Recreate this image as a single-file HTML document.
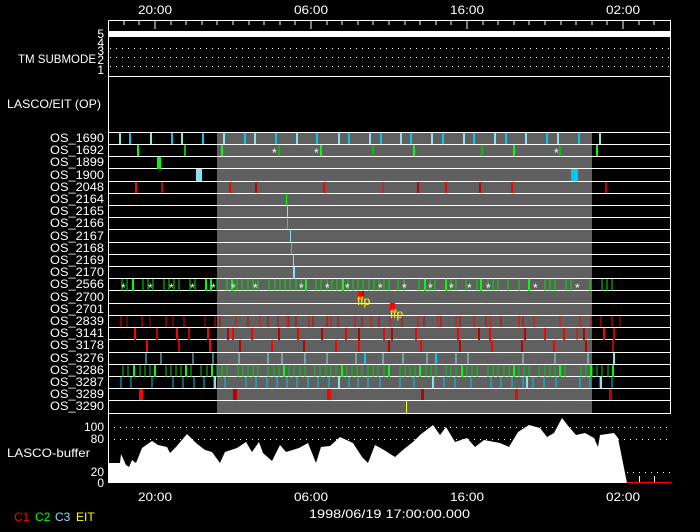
<!DOCTYPE html>
<html><head><meta charset="utf-8"><style>
html,body{margin:0;padding:0;background:#000;}
svg{display:block}
text{font-family:"Liberation Sans",sans-serif;font-size:12px;fill:#fff}
</style></head><body>
<svg width="700" height="532" viewBox="0 0 700 532" xmlns="http://www.w3.org/2000/svg">
<rect width="700" height="532" fill="#000"/>
<rect x="217" y="132" width="375" height="281" fill="#606060"/>
<g lengthAdjust="spacingAndGlyphs">
<text x="138" y="14" textLength="34" lengthAdjust="spacingAndGlyphs">20:00</text>
<text x="294" y="14" textLength="34" lengthAdjust="spacingAndGlyphs">06:00</text>
<text x="450" y="14" textLength="34" lengthAdjust="spacingAndGlyphs">16:00</text>
<text x="606" y="14" textLength="34" lengthAdjust="spacingAndGlyphs">02:00</text>
</g>
<path d="M108.5 20.5H670.5V413.5M108.5 20.5V483" stroke="#fff" fill="none"/>
<path d="M108 76.5H671" stroke="#fff"/>
<path stroke="#fff" stroke-width="1" d="M124 20v5M139 20v5M155 20v9M171 20v5M186 20v5M202 20v5M217 20v5M233 20v5M249 20v5M264 20v5M280 20v5M295 20v5M311 20v9M327 20v5M342 20v5M358 20v5M373 20v5M389 20v5M405 20v5M420 20v5M436 20v5M451 20v5M467 20v9M483 20v5M498 20v5M514 20v5M529 20v5M545 20v5M561 20v5M576 20v5M592 20v5M607 20v5M623 20v9M639 20v5M654 20v5"/>
<rect x="109" y="31" width="562" height="6" fill="#fff"/>
<path d="M110 48.5H670M110 57.5H670M110 66.5H670" stroke="#fff" stroke-dasharray="1 5"/>
<text x="104" y="38" text-anchor="end" font-size="10">5</text>
<text x="104" y="47" text-anchor="end" font-size="10">4</text>
<text x="104" y="55" text-anchor="end" font-size="10">3</text>
<text x="104" y="64" text-anchor="end" font-size="10">2</text>
<text x="104" y="74" text-anchor="end" font-size="10">1</text>
<text x="18" y="63" textLength="78" lengthAdjust="spacingAndGlyphs">TM SUBMODE</text>
<text x="7" y="108" textLength="94" lengthAdjust="spacingAndGlyphs">LASCO/EIT (OP)</text>
<path stroke="#fff" d="M108 132.5H671M108 144.5H671M108 156.5H671M108 168.5H671M108 181.5H671M108 193.5H671M108 205.5H671M108 217.5H671M108 229.5H671M108 242.5H671M108 254.5H671M108 266.5H671M108 278.5H671M108 290.5H671M108 303.5H671M108 315.5H671M108 327.5H671M108 339.5H671M108 352.5H671M108 364.5H671M108 376.5H671M108 388.5H671M108 400.5H671M108 413.5H671"/>
<g>
<text x="50" y="142" textLength="54" lengthAdjust="spacingAndGlyphs">OS_1690</text><text x="50" y="154" textLength="54" lengthAdjust="spacingAndGlyphs">OS_1692</text><text x="50" y="166" textLength="54" lengthAdjust="spacingAndGlyphs">OS_1899</text><text x="50" y="179" textLength="54" lengthAdjust="spacingAndGlyphs">OS_1900</text><text x="50" y="191" textLength="54" lengthAdjust="spacingAndGlyphs">OS_2048</text><text x="50" y="203" textLength="54" lengthAdjust="spacingAndGlyphs">OS_2164</text><text x="50" y="215" textLength="54" lengthAdjust="spacingAndGlyphs">OS_2165</text><text x="50" y="227" textLength="54" lengthAdjust="spacingAndGlyphs">OS_2166</text><text x="50" y="240" textLength="54" lengthAdjust="spacingAndGlyphs">OS_2167</text><text x="50" y="252" textLength="54" lengthAdjust="spacingAndGlyphs">OS_2168</text><text x="50" y="264" textLength="54" lengthAdjust="spacingAndGlyphs">OS_2169</text><text x="50" y="276" textLength="54" lengthAdjust="spacingAndGlyphs">OS_2170</text><text x="50" y="288" textLength="54" lengthAdjust="spacingAndGlyphs">OS_2566</text><text x="50" y="301" textLength="54" lengthAdjust="spacingAndGlyphs">OS_2700</text><text x="50" y="313" textLength="54" lengthAdjust="spacingAndGlyphs">OS_2701</text><text x="50" y="325" textLength="54" lengthAdjust="spacingAndGlyphs">OS_2839</text><text x="50" y="337" textLength="54" lengthAdjust="spacingAndGlyphs">OS_3141</text><text x="50" y="349" textLength="54" lengthAdjust="spacingAndGlyphs">OS_3178</text><text x="50" y="362" textLength="54" lengthAdjust="spacingAndGlyphs">OS_3276</text><text x="50" y="374" textLength="54" lengthAdjust="spacingAndGlyphs">OS_3286</text><text x="50" y="386" textLength="54" lengthAdjust="spacingAndGlyphs">OS_3287</text><text x="50" y="398" textLength="54" lengthAdjust="spacingAndGlyphs">OS_3289</text><text x="50" y="410" textLength="54" lengthAdjust="spacingAndGlyphs">OS_3290</text>
</g>
<g transform="translate(0,133)">
<path stroke="#88e0f0" stroke-width="2" d="M120 0v11M151 0v11M182 0v11M224 0v11M255 0v11M297 0v11M339 0v11M370 0v11M401 0v11M432 0v11M464 0v11M495 0v11M526 0v11M558 0v11M600 0v11"/>
<path stroke="#00c8f0" stroke-width="2" d="M130 0v11M172 0v11M203 0v11M245 0v11M276 0v11M317 0v11M349 0v11M381 0v11M411 0v11M443 0v11M474 0v11M506 0v11M547 0v11M579 0v11"/>
</g>
<g transform="translate(0,145)">
<path stroke="#00ff00" stroke-width="2" d="M138 0v11M222 0v11M321 0v11M514 0v11M597 0v11M414 0v11"/>
<path stroke="#00c000" stroke-width="2" d="M185 0v11M279 0v11M373 0v11M482 0v11M560 0v11"/>
<text x="272" y="12" font-size="9">*</text><text x="314" y="12" font-size="9">*</text><text x="554" y="12" font-size="9">*</text>
</g>
<rect x="157" y="157" width="4" height="12" fill="#00ff00"/>
<rect x="196" y="169" width="6" height="12" fill="#88e0f0"/>
<rect x="571" y="169" width="7" height="12" fill="#00c8f0"/>
<g transform="translate(0,182)">
<path stroke="#ff0000" stroke-width="2" d="M136 0v11M230 0v11M324 0v11M446 0v11M512 0v11"/>
<path stroke="#c00000" stroke-width="2" d="M162 0v11M256 0v11M418 0v11M480 0v11M606 0v11"/>
<path stroke="#ff0000" stroke-width="1" d="M383 0v11"/>
</g>
<path stroke="#00ff00" d="M286.5 194v11M287.5 218v11M291.5 243v11"/>
<path stroke="#88e0f0" d="M287.5 206v11M290.5 230v12M293.5 255v11"/>
<rect x="293" y="267" width="2" height="12" fill="#88e0f0"/>
<g transform="translate(0,279)">
<path stroke="#00e000" stroke-width="1" d="M122 0v12M127 0v12M143 0v12M148 0v12M153 0v12M164 0v12M169 0v12M174 0v12M179 0v12M190 0v12M195 0v12M211 0v12M217 0v12M227 0v12M232 0v12M237 0v12M242 0v12M248 0v12M253 0v12M258 0v12M269 0v12M275 0v12M280 0v12M285 0v12M290 0v12M296 0v12M301 0v12M316 0v12M321 0v12M327 0v12M332 0v12M337 0v12M342 0v12M348 0v12M353 0v12M358 0v12M363 0v12M369 0v12M374 0v12M379 0v12M384 0v12M389 0v12M398 0v12M404 0v12M419 0v12M425 0v12M430 0v12M435 0v12M451 0v12M456 0v12M466 0v12M477 0v12M488 0v12M493 0v12M498 0v12M508 0v12M519 0v12M529 0v12M545 0v12M550 0v12M555 0v12M566 0v12M571 0v12M590 0v12M602 0v12M607 0v12M612 0v12"/>
<path stroke="#00ff00" stroke-width="2" d="M133 0v12M206 0v12M306 0v12M211 0v12M232 0v12M343 0v12M425 0v12M446 0v12M481 0v12M529 0v12"/>
<g font-size="9"><text x="121" y="13">*</text><text x="148" y="13">*</text><text x="169" y="13">*</text><text x="190" y="13">*</text><text x="211" y="13">*</text><text x="231" y="13">*</text><text x="253" y="13">*</text><text x="299" y="13">*</text><text x="325" y="13">*</text><text x="345" y="13">*</text><text x="378" y="13">*</text><text x="402" y="13">*</text><text x="428" y="13">*</text><text x="449" y="13">*</text><text x="467" y="13">*</text><text x="486" y="13">*</text><text x="533" y="13">*</text><text x="575" y="13">*</text></g>
</g>
<rect x="358" y="291" width="4" height="8" fill="#ff0000"/><rect x="362" y="291" width="2" height="8" fill="#c00000"/>
<text x="357" y="305" font-size="9" style="fill:#ff0">ffp</text>
<rect x="390" y="303" width="5" height="8" fill="#ff0000"/>
<text x="390" y="318" font-size="9" style="fill:#ff0">ffp</text>
<g transform="translate(0,316)">
<path stroke="#ff0000" d="M121 0v11M142 0v11M166 0v11M184 0v11M215 0v11M236 0v11M260 0v11M287 0v11M309 0v11M331 0v11M355 0v11M371 0v11M390 0v11M418 0v11M438 0v11M456 0v11M474 0v11M490 0v11M519 0v11M534 0v11M560 0v11M580 0v11M601 0v11M612 0v11"/>
<path stroke="#c00000" d="M127 0v11M150 0v11M173 0v11M205 0v11M220 0v11M248 0v11M268 0v11M278 0v11M289 0v11M296 0v11M313 0v11M327 0v11M338 0v11M362 0v11M379 0v11M402 0v11M424 0v11M441 0v11M460 0v11M486 0v11M501 0v11M523 0v11M591 0v11M620 0v11"/>
</g>
<g transform="translate(0,328)">
<path stroke="#ff0000" stroke-width="2" d="M135 0v12M177 0v12M208 0v12M233 0v12M252 0v12M298 0v12M346 0v12M384 0v12M416 0v12M458 0v12M490 0v12M545 0v12M564 0v12M604 0v12"/>
<path stroke="#c00000" stroke-width="2" d="M157 0v12M189 0v12M228 0v12M279 0v12M322 0v12M359 0v12M392 0v12M479 0v12M525 0v12M584 0v12M614 0v12"/>
<path stroke="#ff0000" stroke-width="1" d="M577 0v12"/>
</g>
<g transform="translate(0,340)">
<path stroke="#ff0000" stroke-width="2" d="M147 0v12M210 0v12M272 0v12M336 0v12M359 0v12M421 0v12M492 0v12M554 0v12"/>
<path stroke="#c00000" stroke-width="2" d="M179 0v12M240 0v12M304 0v12M389 0v12M460 0v12M522 0v12M586 0v12M613 0v12"/>
</g>
<g transform="translate(0,353)">
<path stroke="#88e0f0" d="M146 0v11M161 0v11M193 0v11M213 0v11M239 0v11M268 0v11M282 0v11M305 0v11M327 0v11M356 0v11M383 0v11M403 0v11M427 0v11M456 0v11M468 0v11M523 0v11M555 0v11M588 0v11"/>
<path stroke="#00c8f0" stroke-width="2" d="M365 0v11M436 0v11"/>
<path stroke="#88e0f0" stroke-width="2" d="M614 0v11"/>
</g>
<g transform="translate(0,365)">
<path stroke="#00d000" d="M123 0v12M128 0v12M140 0v12M145 0v12M150 0v12M166 0v12M171 0v12M176 0v12M181 0v12M191 0v12M201 0v12M207 0v12M217 0v12M222 0v12M227 0v12M238 0v12M243 0v12M248 0v12M253 0v12M258 0v12M268 0v12M274 0v12M279 0v12M289 0v12M294 0v12M300 0v12M305 0v12M315 0v12M320 0v12M326 0v12M331 0v12M336 0v12M347 0v12M352 0v12M357 0v12M362 0v12M368 0v12M373 0v12M378 0v12M384 0v12M400 0v12M405 0v12M410 0v12M415 0v12M426 0v12M431 0v12M436 0v12M446 0v12M451 0v12M456 0v12M467 0v12M472 0v12M477 0v12M488 0v12M493 0v12M498 0v12M504 0v12M509 0v12M519 0v12M524 0v12M529 0v12M539 0v12M545 0v12M550 0v12M555 0v12M565 0v12M581 0v12M586 0v12M592 0v12M597 0v12M602 0v12M608 0v12M613 0v12"/>
<path stroke="#00ff00" stroke-width="2" d="M134 0v12M155 0v12M186 0v12M212 0v12M284 0v12M342 0v12M389 0v12M420 0v12M462 0v12M514 0v12M560 0v12M591 0v12M613 0v12"/>
</g>
<g transform="translate(0,377)">
<path stroke="#00c8f0" d="M121 0v11M131 0v11M152 0v11M173 0v11M183 0v11M194 0v11M204 0v11M214 0v11M225 0v11M246 0v11M256 0v11M267 0v11M277 0v11M287 0v11M297 0v11M308 0v11M318 0v11M329 0v11M339 0v11M349 0v11M358 0v11M368 0v11M380 0v11M400 0v11M414 0v11M444 0v11M455 0v11M471 0v11M491 0v11M501 0v11M512 0v11M523 0v11M533 0v11M544 0v11M556 0v11M580 0v11M590 0v11M600 0v11M612 0v11"/>
<path stroke="#88e0f0" stroke-width="2" d="M215 0v11M339 0v11M433 0v11M527 0v11M601 0v11"/>
</g>
<rect x="139" y="389" width="4" height="11" fill="#ff0000"/>
<rect x="233" y="389" width="4" height="11" fill="#c00000"/>
<rect x="327" y="389" width="4" height="11" fill="#ff0000"/>
<rect x="421" y="389" width="3" height="11" fill="#c00000"/>
<rect x="515" y="389" width="3" height="11" fill="#ff0000"/>
<rect x="609" y="389" width="3" height="11" fill="#c00000"/>
<path stroke="#ffff00" d="M406.5 401v12"/>
<path d="M108 427.5H670M108 439.5H670M627 472.5H670" stroke="#fff" stroke-dasharray="1 5"/>
<polygon fill="#fff" points="108,483 108,463 120,463 121,454 126,465 129,467 132,460 136,463 142,448 152,441 158,445 167,447 170,453 176,447 187,434 196,443 205,450 212,452 220,463 225,452 237,448 246,442 252,452 259,442 263,453 272,461 280,445 286,452 299,448 308,443 316,463 321,447 330,446 340,437 353,443 362,457 368,463 375,445 384,450 395,457 404,449 413,442 420,435 433,425 440,435 446,427 455,442 467,438 475,447 484,440 500,443 509,447 518,432 529,425 540,428 547,437 554,433 562,418 569,427 576,435 585,433 594,438 598,447 600,435 614,433 618,438 627,483"/>
<path d="M627 482.5H671" stroke="#ff0000"/>
<path d="M639.5 476v6M654.5 476v6" stroke="#fff"/>
<text x="104" y="431" text-anchor="end">100</text>
<text x="104" y="443" text-anchor="end">80</text>
<text x="104" y="476" text-anchor="end">20</text>
<text x="104" y="487" text-anchor="end">0</text>
<text x="7" y="457" textLength="83" lengthAdjust="spacingAndGlyphs">LASCO-buffer</text>
<text x="138" y="501" textLength="34" lengthAdjust="spacingAndGlyphs">20:00</text>
<text x="294" y="501" textLength="34" lengthAdjust="spacingAndGlyphs">06:00</text>
<text x="450" y="501" textLength="34" lengthAdjust="spacingAndGlyphs">16:00</text>
<text x="606" y="501" textLength="34" lengthAdjust="spacingAndGlyphs">02:00</text>
<text x="309" y="518" textLength="161" lengthAdjust="spacingAndGlyphs">1998/06/19 17:00:00.000</text>
<text x="14" y="521" font-size="9" style="fill:#ff0000">C1</text>
<text x="35" y="521" font-size="9" style="fill:#00ff00">C2</text>
<text x="55" y="521" font-size="9" style="fill:#88e0f0">C3</text>
<text x="76" y="521" font-size="9" style="fill:#ffff00">EIT</text>
</svg>
</body></html>
